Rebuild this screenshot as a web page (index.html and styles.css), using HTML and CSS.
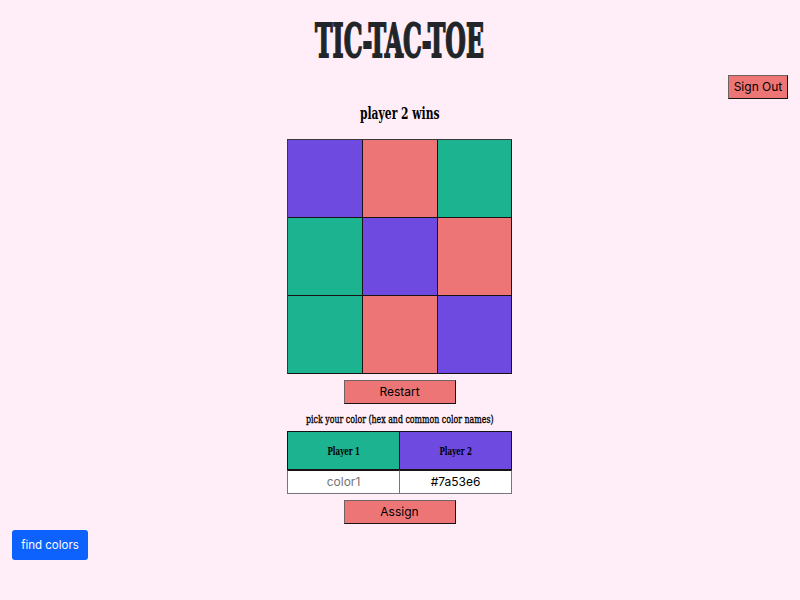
FILE: index.html
```
<!DOCTYPE html>
<html lang="en">
<head>
<meta charset="utf-8">
<title>Tic-Tac-Toe</title>
<link rel="stylesheet" href="styles.css">
</head>
<body>
<header>
<h1><svg class="slab title" width="300" height="50"><text x="65" y="42.500" textLength="169" lengthAdjust="spacingAndGlyphs">TIC-TAC-TOE</text></svg></h1>
<button class="btn sign-out">Sign Out</button>
</header>
<main>
<h2><svg class="slab status" width="190" height="24"><text x="55" y="17" textLength="79.500" lengthAdjust="spacingAndGlyphs">player 2 wins</text></svg></h2>
<div class="board">
<div class="cell p2"></div><div class="cell"></div><div class="cell p1"></div>
<div class="cell p1"></div><div class="cell p2"></div><div class="cell"></div>
<div class="cell p1"></div><div class="cell"></div><div class="cell p2"></div>
</div>
<button class="btn">Restart</button>
<p><svg class="slab hint" width="400" height="16"><text x="106" y="10.500" textLength="187.500" lengthAdjust="spacingAndGlyphs">pick your color (hex and common color names)</text></svg></p>
<div class="players">
<div class="player p1"><svg class="slab name" width="90" height="16"><text x="28.500" y="12" textLength="32.500" lengthAdjust="spacingAndGlyphs">Player 1</text></svg></div>
<div class="player p2"><svg class="slab name" width="90" height="16"><text x="28.500" y="12" textLength="32.500" lengthAdjust="spacingAndGlyphs">Player 2</text></svg></div>
<input placeholder="color1" aria-label="Player 1 color">
<input value="#7a53e6" aria-label="Player 2 color">
</div>
<button class="btn">Assign</button>
</main>
<button class="find">find colors</button>
</body>
</html>
```
FILE: styles.css
```
* { box-sizing: border-box; }
body { margin: 0; height: 600px; overflow: hidden; background: #ffeef8; font: 12px/18px Inter, sans-serif; color: #212529; }
h1, h2, p { margin: 0; }
svg { display: block; overflow: visible; }
.slab { font-family: "DejaVu Serif", serif; font-weight: bold; }
.slab text { fill: #000; }
header { display: flex; flex-direction: column; align-items: center; padding: 14px 12px 0; }
.title { font-size: 46px; }
.title text { fill: #212529; stroke: #212529; stroke-width: 1.8px; }
.status { font-size: 16px; }
.hint { font-size: 11px; font-weight: normal; }
.hint text { stroke: #000; stroke-width: .35px; }
.name { font-size: 11px; }
.btn { width: 112px; height: 24px; padding: 0; background: #ee7575; border: 1px solid; border-color: #6b6461 #171312 #171312 #6b6461; color: #000; font: inherit; line-height: 18px; }
.sign-out { width: 60px; align-self: flex-end; margin-top: 11px; }
main { display: flex; flex-direction: column; align-items: center; padding: 3px 1px 0 0; }
.board { display: grid; grid-template-columns: 75px 75px 74px; grid-template-rows: repeat(3, 78px); margin: 13px 0 6px; width: 225px; height: 235px; padding: 1px 0 0 1px; background: #3c3838; }
.cell { background: #ee7575; border-right: 1px solid #171312; border-bottom: 1px solid #171312; }
.p1 { background: #1cb490; }
.p2 { background: #6f4ae0; }
.hint { margin: 8px 0 3px; }
.players { display: grid; grid-template-columns: 113px 112px; grid-template-rows: 39px 24px; margin-bottom: 6px; }
.player { display: flex; align-items: center; justify-content: center; border: 1px solid #171312; }
.player + .player, input + input { border-left: 0; }
input { width: 100%; min-width: 0; padding: 0; border: 1px solid #777; border-top-color: #171312; background: #fff; color: #000; font: inherit; text-align: center; }
input::placeholder { color: #757575; }
.find { display: block; width: 76px; height: 30px; margin: 6px 0 0 12px; padding: 0; border: 0; border-radius: 3px; background: #0d62fd; color: #fff; font: inherit; font-size: 11.5px; }
```
